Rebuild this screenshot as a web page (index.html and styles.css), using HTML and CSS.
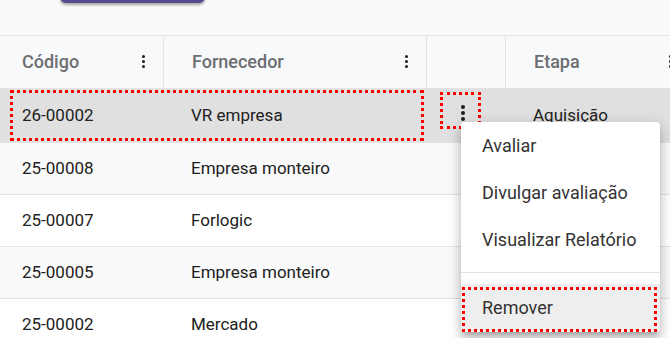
FILE: index.html
```html
<!DOCTYPE html>
<html lang="pt">
<head>
<meta charset="utf-8">
<link rel="stylesheet" href="styles.css">
</head>
<body>
<div class="toolbar"><div class="btn"></div></div>
<div class="table">
  <div class="thead">
    <div class="th c1"><span>Código</span><span class="kebab sm"><i></i><i></i><i></i></span></div>
    <div class="th c2"><span>Fornecedor</span><span class="kebab sm"><i></i><i></i><i></i></span></div>
    <div class="th c3"></div>
    <div class="th c4"><span>Etapa</span><span class="kebab sm"><i></i><i></i><i></i></span></div>
  </div>
  <div class="row sel">
    <div class="td c1">26-00002</div>
    <div class="td c2">VR empresa</div>
    <div class="td c3"><span class="kebab"><i></i><i></i><i></i></span><span class="mark kmark"></span></div>
    <div class="td c4">Aquisição</div>
    <span class="mark rmark"></span>
  </div>
  <div class="row alt">
    <div class="td c1">25-00008</div>
    <div class="td c2">Empresa monteiro</div>
    <div class="td c3"></div>
    <div class="td c4"></div>
  </div>
  <div class="row">
    <div class="td c1">25-00007</div>
    <div class="td c2">Forlogic</div>
    <div class="td c3"></div>
    <div class="td c4"></div>
  </div>
  <div class="row alt">
    <div class="td c1">25-00005</div>
    <div class="td c2">Empresa monteiro</div>
    <div class="td c3"></div>
    <div class="td c4"></div>
  </div>
  <div class="row">
    <div class="td c1">25-00002</div>
    <div class="td c2">Mercado</div>
    <div class="td c3"></div>
    <div class="td c4"></div>
  </div>
</div>
<div class="menu">
  <div class="item">Avaliar</div>
  <div class="item">Divulgar avaliação</div>
  <div class="item">Visualizar Relatório</div>
  <div class="divider"></div>
  <div class="item active">Remover<span class="mark mmark"></span></div>
</div>
</body>
</html>
```

FILE: styles.css
```css
html, body {
  margin: 0;
  padding: 0;
}
body {
  width: 670px;
  height: 338px;
  overflow: hidden;
  background: #fafafa;
  font-family: Roboto, "Noto Sans", sans-serif;
  color: #222;
  position: relative;
}
.toolbar {
  height: 35px;
  padding-left: 60px;
  display: flex;
  align-items: flex-start;
}
.btn {
  width: 145px;
  height: 36px;
  margin-top: -33px;
  border-radius: 6px;
  background: #574b90;
  box-shadow: 0 2px 3px rgba(0,0,0,.35);
}
.table {
  width: 690px;
}
.thead, .row {
  display: grid;
  grid-template-columns: 163px 263px 79px 185px;
}
.thead {
  height: 52px;
  border-top: 1px solid #e4e4e4;
  border-bottom: 1px solid #e4e4e4;
  background: #f8f9fa;
}
.th {
  display: flex;
  align-items: center;
  justify-content: space-between;
  padding-right: 18px;
  padding-bottom: 2px;
  font-size: 18px;
  font-weight: 500;
  color: #6c6e71;
}
.th.c2, .th.c3, .th.c4 {
  border-left: 1px solid #e4e4e4;
}
.c1 { padding-left: 22px; }
.c2 { padding-left: 28px; }
.c4 { padding-left: 28px; }
.row {
  height: 51px;
  border-bottom: 1px solid #e2e2e2;
  background: #ffffff;
  position: relative;
}
.row.alt { background: #fafafa; }
.row.sel { background: #e0e0e0; height: 53px; }
.td {
  display: flex;
  align-items: center;
  padding-bottom: 2px;
  font-size: 17px;
  color: #212121;
  position: relative;
}
.kebab {
  display: inline-flex;
  flex-direction: column;
  gap: 2px;
}
.kebab i {
  display: block;
  width: 4px;
  height: 4px;
  border-radius: 50%;
  background: #1e1e1e;
}
.kebab.sm { gap: 2px; }
.kebab.sm i { width: 3px; height: 3px; }
.td.c3 .kebab { margin-left: 35px; margin-top: -3px; }
.mark {
  position: absolute;
  border: 3px dotted #ff0000;
  box-sizing: border-box;
  pointer-events: none;
}
.rmark {
  left: 10px;
  top: 1px;
  width: 414px;
  height: 51px;
}
.kmark {
  left: 14px;
  top: 3px;
  width: 41px;
  height: 37px;
}
.menu {
  position: absolute;
  left: 461px;
  top: 122px;
  width: 199px;
  background: #fff;
  border-radius: 4px;
  padding-bottom: 1px;
  box-shadow: 0 5px 5px -3px rgba(0,0,0,.2), 0 8px 10px 1px rgba(0,0,0,.14), 0 3px 14px 2px rgba(0,0,0,.12);
}
.item {
  height: 47px;
  display: flex;
  align-items: center;
  padding-left: 21px;
  font-size: 18px;
  color: #333;
  position: relative;
}
.item.active { background: #eeeeee; }
.divider {
  height: 1px;
  background: #e2e2e2;
  margin: 9px 0 11px;
}
.mmark {
  left: 1px;
  top: 3px;
  right: 3px;
  bottom: -1px;
}
```
